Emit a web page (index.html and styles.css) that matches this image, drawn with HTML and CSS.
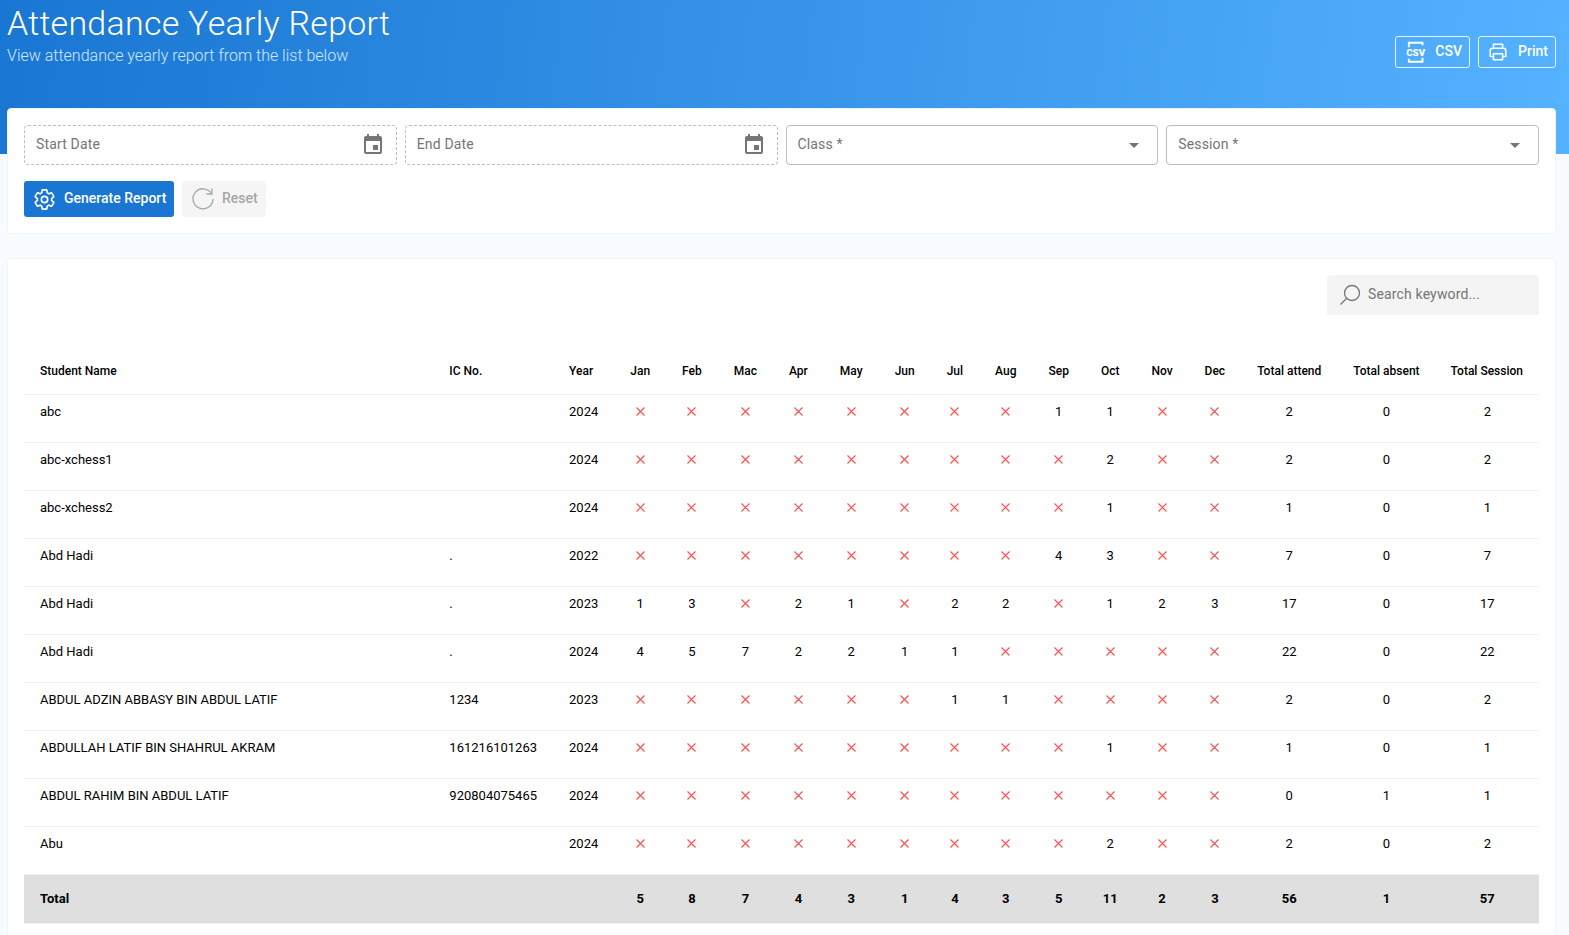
FILE: index.html
```html
<!DOCTYPE html>
<html lang="en">
<head>
<meta charset="utf-8">
<title>Attendance Yearly Report</title>
<link rel="stylesheet" href="styles.css">
</head>
<body>
<header class="hero">
  <div class="hero-text">
    <h1>Attendance Yearly Report</h1>
    <p>View attendance yearly report from the list below</p>
  </div>
  <div class="hero-actions">
    <button class="ghost ghost-csv" type="button">
      <svg class="ico-csv" viewBox="0 0 24 24" fill="none" stroke="currentColor" stroke-width="2"><path d="M5 7V2.500h14V5M5 19v3h14v-4"/><text x="12" y="16" text-anchor="middle" class="csv-mark">CSV</text></svg>
      <span class="label">CSV</span>
    </button>
    <button class="ghost ghost-print" type="button">
      <svg class="ico-print" viewBox="0 0 24 24" fill="none" stroke="currentColor" stroke-width="1.700" stroke-linejoin="round"><path d="M7 8V3.500h10V8M7 17H3.500v-6.500A2.500 2.500 0 0 1 6 8h12a2.500 2.500 0 0 1 2.500 2.500V17H17"/><path d="M7 14h10v6.500H7z"/></svg>
      <span class="label">Print</span>
    </button>
  </div>
</header>

<main class="page">
  <section class="card filter">
    <div class="fields">
      <div class="field dashed"><span class="label">Start Date</span><svg class="ico-cal" viewBox="0 0 24 24"><path d="M17 12h-5v5h5v-5zM16 1v2H8V1H6v2H5c-1.110 0-1.990.9-1.990 2L3 19c0 1.100.89 2 2 2h14c1.100 0 2-.9 2-2V5c0-1.100-.9-2-2-2h-1V1h-2zm3 18H5V8h14v11z"/></svg></div>
      <div class="field dashed"><span class="label">End Date</span><svg class="ico-cal" viewBox="0 0 24 24"><path d="M17 12h-5v5h5v-5zM16 1v2H8V1H6v2H5c-1.110 0-1.990.9-1.990 2L3 19c0 1.100.89 2 2 2h14c1.100 0 2-.9 2-2V5c0-1.100-.9-2-2-2h-1V1h-2zm3 18H5V8h14v11z"/></svg></div>
      <div class="field solid"><span class="label">Class *</span><i class="caret"></i></div>
      <div class="field solid"><span class="label">Session *</span><i class="caret"></i></div>
    </div>
    <div class="actions">
      <button class="btn primary" type="button">
        <svg class="ico-gear" viewBox="0 0 24 24" fill="none" stroke="currentColor" stroke-width="1.700"><path d="M19.430 12.980c.04-.32.07-.64.07-.98s-.03-.66-.07-.98l2.110-1.650c.19-.15.24-.42.12-.64l-2-3.460c-.12-.22-.39-.3-.61-.22l-2.490 1c-.52-.4-1.080-.73-1.690-.98l-.38-2.650C14.460 2.180 14.250 2 14 2h-4c-.25 0-.46.18-.49.42l-.38 2.650c-.61.25-1.170.59-1.690.98l-2.490-1c-.23-.09-.49 0-.61.22l-2 3.460c-.13.22-.07.49.12.64l2.110 1.650c-.04.32-.07.65-.07.98s.03.66.07.98l-2.110 1.650c-.19.15-.24.42-.12.64l2 3.460c.12.22.39.3.61.22l2.490-1c.52.4 1.080.73 1.690.98l.38 2.650c.03.24.24.42.49.42h4c.25 0 .46-.18.49-.42l.38-2.650c.61-.25 1.170-.59 1.690-.98l2.490 1c.23.09.49 0 .61-.22l2-3.460c.12-.22.07-.49-.12-.64l-2.110-1.650z"/><circle cx="12" cy="12" r="3.300"/></svg>
        <span class="label">Generate Report</span>
      </button>
      <button class="btn muted" type="button">
        <svg class="ico-reset" viewBox="0 0 24 24" fill="none" stroke="currentColor" stroke-width="1.300"><path d="M20.500 6.500A10 10 0 1 0 22 12"/><path d="M21 1.500v5.500h-5.500"/></svg>
        <span class="label">Reset</span>
      </button>
    </div>
  </section>

  <section class="card listing">
    <div class="search-row">
      <div class="search">
        <svg class="ico-search" viewBox="0 0 24 24" fill="none" stroke="currentColor" stroke-width="1.300"><circle cx="14" cy="10" r="7.500"/><path d="M8.500 15.500 2.500 21.500"/></svg>
        <span class="label">Search keyword...</span>
      </div>
    </div>
    <table class="report">
      <thead>
        <tr><th class="left name">Student Name</th><th class="left">IC No.</th><th class="left">Year</th><th>Jan</th><th>Feb</th><th>Mac</th><th>Apr</th><th>May</th><th>Jun</th><th>Jul</th><th>Aug</th><th>Sep</th><th>Oct</th><th>Nov</th><th>Dec</th><th>Total attend</th><th>Total absent</th><th>Total Session</th></tr>
      </thead>
      <tbody>
        <tr><td class="left">abc</td><td class="left"></td><td class="left">2024</td><td><i class="no"></i></td><td><i class="no"></i></td><td><i class="no"></i></td><td><i class="no"></i></td><td><i class="no"></i></td><td><i class="no"></i></td><td><i class="no"></i></td><td><i class="no"></i></td><td>1</td><td>1</td><td><i class="no"></i></td><td><i class="no"></i></td><td>2</td><td>0</td><td>2</td></tr>
        <tr><td class="left">abc-xchess1</td><td class="left"></td><td class="left">2024</td><td><i class="no"></i></td><td><i class="no"></i></td><td><i class="no"></i></td><td><i class="no"></i></td><td><i class="no"></i></td><td><i class="no"></i></td><td><i class="no"></i></td><td><i class="no"></i></td><td><i class="no"></i></td><td>2</td><td><i class="no"></i></td><td><i class="no"></i></td><td>2</td><td>0</td><td>2</td></tr>
        <tr><td class="left">abc-xchess2</td><td class="left"></td><td class="left">2024</td><td><i class="no"></i></td><td><i class="no"></i></td><td><i class="no"></i></td><td><i class="no"></i></td><td><i class="no"></i></td><td><i class="no"></i></td><td><i class="no"></i></td><td><i class="no"></i></td><td><i class="no"></i></td><td>1</td><td><i class="no"></i></td><td><i class="no"></i></td><td>1</td><td>0</td><td>1</td></tr>
        <tr><td class="left">Abd Hadi</td><td class="left">.</td><td class="left">2022</td><td><i class="no"></i></td><td><i class="no"></i></td><td><i class="no"></i></td><td><i class="no"></i></td><td><i class="no"></i></td><td><i class="no"></i></td><td><i class="no"></i></td><td><i class="no"></i></td><td>4</td><td>3</td><td><i class="no"></i></td><td><i class="no"></i></td><td>7</td><td>0</td><td>7</td></tr>
        <tr><td class="left">Abd Hadi</td><td class="left">.</td><td class="left">2023</td><td>1</td><td>3</td><td><i class="no"></i></td><td>2</td><td>1</td><td><i class="no"></i></td><td>2</td><td>2</td><td><i class="no"></i></td><td>1</td><td>2</td><td>3</td><td>17</td><td>0</td><td>17</td></tr>
        <tr><td class="left">Abd Hadi</td><td class="left">.</td><td class="left">2024</td><td>4</td><td>5</td><td>7</td><td>2</td><td>2</td><td>1</td><td>1</td><td><i class="no"></i></td><td><i class="no"></i></td><td><i class="no"></i></td><td><i class="no"></i></td><td><i class="no"></i></td><td>22</td><td>0</td><td>22</td></tr>
        <tr><td class="left">ABDUL ADZIN ABBASY BIN ABDUL LATIF</td><td class="left">1234</td><td class="left">2023</td><td><i class="no"></i></td><td><i class="no"></i></td><td><i class="no"></i></td><td><i class="no"></i></td><td><i class="no"></i></td><td><i class="no"></i></td><td>1</td><td>1</td><td><i class="no"></i></td><td><i class="no"></i></td><td><i class="no"></i></td><td><i class="no"></i></td><td>2</td><td>0</td><td>2</td></tr>
        <tr><td class="left">ABDULLAH LATIF BIN SHAHRUL AKRAM</td><td class="left">161216101263</td><td class="left">2024</td><td><i class="no"></i></td><td><i class="no"></i></td><td><i class="no"></i></td><td><i class="no"></i></td><td><i class="no"></i></td><td><i class="no"></i></td><td><i class="no"></i></td><td><i class="no"></i></td><td><i class="no"></i></td><td>1</td><td><i class="no"></i></td><td><i class="no"></i></td><td>1</td><td>0</td><td>1</td></tr>
        <tr><td class="left">ABDUL RAHIM BIN ABDUL LATIF</td><td class="left">920804075465</td><td class="left">2024</td><td><i class="no"></i></td><td><i class="no"></i></td><td><i class="no"></i></td><td><i class="no"></i></td><td><i class="no"></i></td><td><i class="no"></i></td><td><i class="no"></i></td><td><i class="no"></i></td><td><i class="no"></i></td><td><i class="no"></i></td><td><i class="no"></i></td><td><i class="no"></i></td><td>0</td><td>1</td><td>1</td></tr>
        <tr><td class="left">Abu</td><td class="left"></td><td class="left">2024</td><td><i class="no"></i></td><td><i class="no"></i></td><td><i class="no"></i></td><td><i class="no"></i></td><td><i class="no"></i></td><td><i class="no"></i></td><td><i class="no"></i></td><td><i class="no"></i></td><td><i class="no"></i></td><td>2</td><td><i class="no"></i></td><td><i class="no"></i></td><td>2</td><td>0</td><td>2</td></tr>
      </tbody>
      <tfoot>
        <tr><td class="left">Total</td><td></td><td></td><td>5</td><td>8</td><td>7</td><td>4</td><td>3</td><td>1</td><td>4</td><td>3</td><td>5</td><td>11</td><td>2</td><td>3</td><td>56</td><td>1</td><td>57</td></tr>
      </tfoot>
    </table>
  </section>
</main>
</body>
</html>
```

FILE: styles.css
```css
* { box-sizing: border-box; }
html, body { height: 100%; overflow: hidden; }
body {
  margin: 0;
  background: #f8fbff;
  font-family: Roboto, "Liberation Sans", sans-serif;
  color: #000;
}
.label { position: relative; top: -1px; }
.hero {
  height: 154px;
  padding: 0 13px 0 7px;
  display: flex;
  justify-content: space-between;
  align-items: flex-start;
  background: linear-gradient(97deg, #1976d2 0%, #54b2ff 100%);
  color: #fff;
}
.hero-text h1 {
  margin: 2px 0 0;
  font-size: 34px;
  line-height: 42px;
  font-weight: 300;
  letter-spacing: .25px;
}
.hero-text p {
  margin: 1px 0 0;
  font-size: 16px;
  line-height: 22px;
  font-weight: 300;
  color: #d4e9fb;
}
.hero-actions { display: flex; gap: 8px; margin-top: 36px; }
.ghost {
  height: 32px;
  display: flex;
  align-items: center;
  background: transparent;
  border: 1px solid #e8f3fd;
  border-radius: 3px;
  color: #fff;
  font: 500 14px Roboto, sans-serif;
}
.ghost-csv { width: 75px; padding: 0 7px 0 8px; gap: 8px; }
.ghost-print { width: 78px; padding: 0 7px 0 8px; gap: 9px; }
.ico-csv { width: 24px; height: 24px; }
.csv-mark { font: 900 10px Roboto, sans-serif; fill: currentColor; stroke: none; }
.ico-print { width: 22px; height: 22px; }

.page { padding: 0 13px 0 7px; margin-top: -46px; }
.card {
  background: #fff;
  border: 1px solid #f1f4f8;
  border-radius: 4px;
  padding: 16px;
}
.filter { height: 126px; }
.fields { display: grid; grid-template-columns: repeat(4, 1fr); gap: 8px; }
.field {
  height: 40px;
  padding: 0 11px;
  display: flex;
  align-items: center;
  justify-content: space-between;
  border-radius: 4px;
  font-size: 14px;
  letter-spacing: .15px;
  color: #757575;
}
.dashed { border: 1px dashed #bdbdbd; padding-right: 11px; }
.solid { border: 1px solid #bdbdbd; padding-right: 18px; }
.ico-cal { width: 24px; height: 24px; fill: #757575; }
.caret {
  width: 0;
  height: 0;
  margin-top: 1px;
  border: 5px solid transparent;
  border-top-color: #757575;
  border-bottom-width: 0;
}
.actions { display: flex; gap: 8px; margin-top: 16px; }
.btn {
  height: 36px;
  display: flex;
  align-items: center;
  border: 0;
  border-radius: 3px;
  font: 500 14px Roboto, sans-serif;
}
.primary { width: 150px; padding: 0 0 0 9px; gap: 8px; background: #1976d2; color: #fff; }
.muted { width: 84px; padding: 0 0 0 9px; gap: 7px; background: #f5f5f5; color: #a6a6a6; }
.ico-gear { width: 23px; height: 23px; }
.ico-reset { width: 24px; height: 24px; }

.listing { margin-top: 24px; padding-bottom: 12px; }
.search-row { display: flex; justify-content: flex-end; }
.search {
  width: 212px;
  height: 40px;
  padding: 0 11px;
  display: flex;
  align-items: center;
  gap: 6px;
  background: #f4f4f4;
  border-radius: 4px 4px 0 0;
  font-size: 14px;
  letter-spacing: .15px;
  color: #757575;
}
.ico-search { width: 24px; height: 24px; }

.report {
  width: 100%;
  margin-top: 31px;
  border-collapse: collapse;
  font-size: 13px;
}
.report th, .report td { padding: 0 16px; text-align: center; white-space: nowrap; }
.report .left { text-align: left; }
.report th { height: 48px; padding-top: 2px; font-size: 12px; font-weight: 500; }
.report th:last-child { padding-left: 15px; }
.report .name { width: 100%; }
.report tbody td {
  height: 48px;
  padding-top: 8px;
  padding-bottom: 8px;
  line-height: 18px;
  vertical-align: top;
  border-top: 1px solid #f0f0f0;
}
.report tfoot td {
  height: 49px;
  font-weight: 700;
  background: #dfdfdf;
  border-top: 1px solid #f0f0f0;
  border-bottom: 1px solid #f0f0f0;
}
.no {
  display: inline-block;
  width: 9px;
  height: 9px;
  vertical-align: 0;
  background: url("data:image/svg+xml,%3Csvg xmlns='http://www.w3.org/2000/svg' viewBox='0 0 9 9'%3E%3Cpath d='M.5.5l8 8M8.500.5l-8 8' stroke='%23ff4d4d' stroke-width='1.100' fill='none'/%3E%3C/svg%3E") center / 100% 100% no-repeat;
}
```
